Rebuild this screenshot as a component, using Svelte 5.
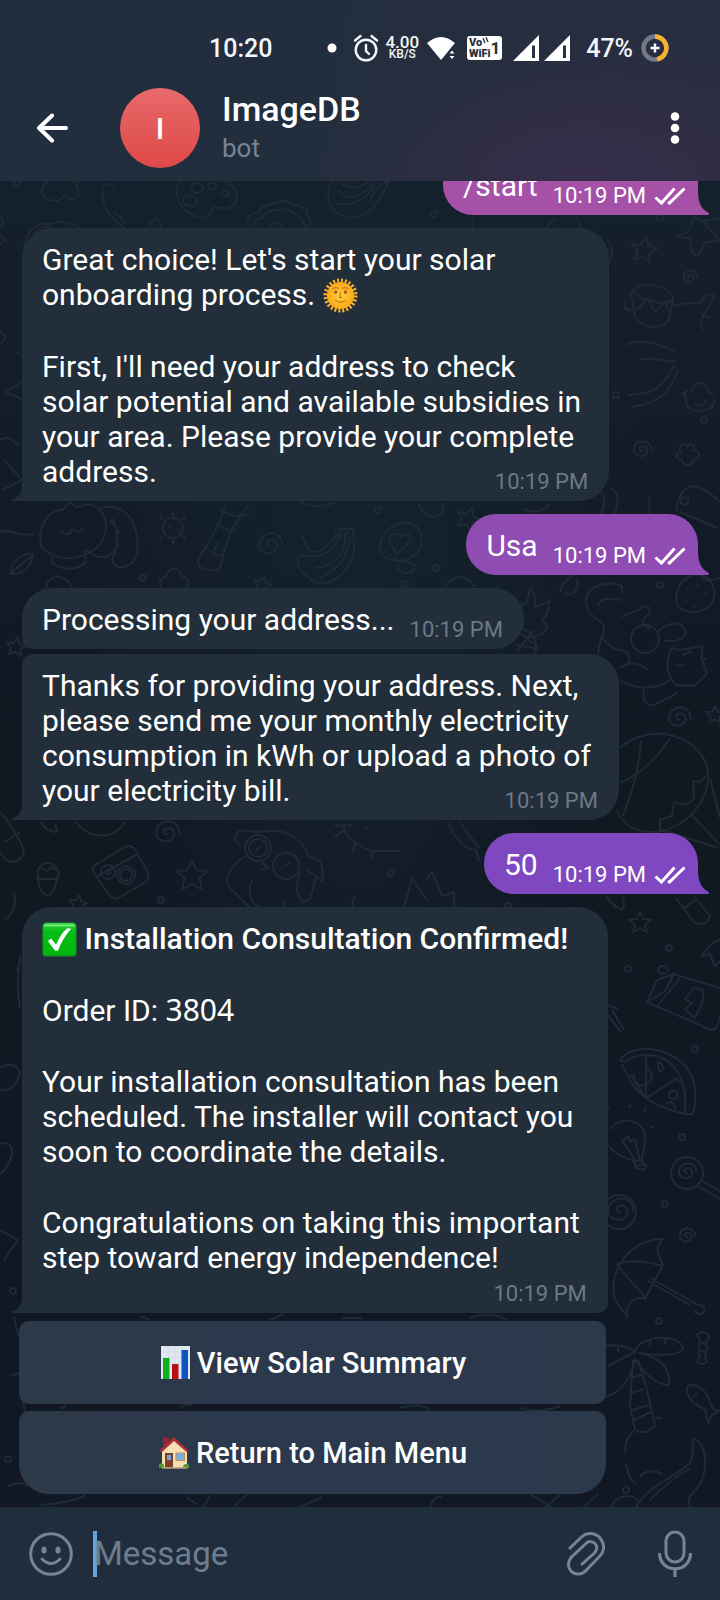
<script>
  const stars = [
    [644, 250, 13, 10], [192, 876, 16, 0], [78, 904, 9, 10], [640, 923, 11, 0],
    [16, 647, 10, 10], [468, 519, 12, 20], [715, 715, 9, 0], [262, 585, 9, 15]
  ];
  const swirls = [
    [690, 277, 7], [270, 545, 12], [679, 718, 11], [167, 833, 12], [687, 1172, 9],
    [687, 1236, 8], [620, 1211, 13], [642, 450, 9]
  ];
  const dots = [
    [434, 214], [660, 218], [378, 510], [436, 568], [143, 578], [405, 584], [660, 585],
    [161, 900], [391, 873], [508, 906], [669, 948], [628, 969], [695, 1049], [682, 1137],
    [665, 1204], [659, 1321], [626, 1490], [17, 183], [8, 1459], [13, 1291], [704, 420], [616, 395]
  ];
  const starPath = 'M0-1L.3-.36 1-.3.46.16.62.86 0 .48-.62.86-.46.16-1-.3-.3-.36Z';
  const swirlPath = 'M.1.1C-.3.2-.4-.3 0-.4.5-.5.8.1.4.5-.1.9-.9.6-.9 0-.9-.7-.3-1 .2-.95.8-.9 1.1-.4 1 .1';
  const time = '10:19 PM';
</script>

{#snippet ticks()}
  <svg class="ticks" viewBox="0 0 32 18" aria-hidden="true">
    <path d="M1.500 10.500 7.500 16 20.500 1.500M14 15l1.500 1L30.500 1.500" />
  </svg>
{/snippet}

{#snippet tailIn()}
  <svg class="tail tail-in" viewBox="0 0 12 16" aria-hidden="true">
    <path d="M12 0H11C11 7 8 12 1 14.500Q0 15 1 16H12Z" />
  </svg>
{/snippet}

{#snippet tailOut()}
  <svg class="tail tail-out" viewBox="0 0 12 24" aria-hidden="true">
    <path d="M0 0H1C1 11 4 18 11 21.500Q13 23 11 24H0Z" />
  </svg>
{/snippet}

<div class="screen">
  <header>
    <div class="status">
      <span class="clock">10:20</span>
      <div class="indicators">
        <svg class="dot" viewBox="0 0 10 10" aria-hidden="true"><circle cx="5" cy="5" r="4.500" fill="#fff" /></svg>
        <svg class="alarm" viewBox="0 0 26 28" aria-hidden="true">
          <g fill="none" stroke="#f3f5f8" stroke-width="2.400" stroke-linecap="round">
            <circle cx="13" cy="16" r="10.300" />
            <path d="M13 11v6l3 3M2 6.500 7.500 2M24 6.500 18.500 2" />
          </g>
        </svg>
        <div class="rate"><span>4.00</span><small>KB/S</small></div>
        <svg class="wifi" viewBox="0 0 28 26" aria-hidden="true">
          <path d="M0 8Q14-4 28 8L21 16.500 19 19 14 25Z" fill="#fff" />
          <path d="M22.500 18.500 25 15.500l2.500 3ZM22.500 21 25 24l2.500-3Z" fill="#fff" />
        </svg>
        <div class="vowifi">
          <span class="vw-text"><span>Vo<svg viewBox="0 0 8 8" aria-hidden="true"><path d="M1 1l2 5M4 0l2 5" stroke="#263040" stroke-width="1.300" /></svg></span><span>WiFi</span></span>
          <span class="vw-num">1</span>
        </div>
        <svg class="signal" viewBox="0 0 57 27" aria-hidden="true">
          <path d="M0 26 26 0V26ZM31 26 57 0V26Z" fill="#fff" />
          <path d="M20.500 10.500V23M51.500 10.500V23" stroke="#283143" stroke-width="3" />
        </svg>
        <span class="percent">47%</span>
        <svg class="ring" viewBox="0 0 28 28" aria-hidden="true">
          <circle cx="14" cy="14" r="11.500" fill="none" stroke="#737a87" stroke-width="4.500" />
          <path d="M14 2.500A11.500 11.500 0 0 1 16 25.300" fill="none" stroke="#f9b12c" stroke-width="4.500" />
          <path d="M14 9.500v9M9.500 14h9" stroke="#fff" stroke-width="2.400" />
        </svg>
      </div>
    </div>
    <div class="appbar">
      <button class="icon-btn back" aria-label="Back">
        <svg viewBox="0 0 32 30" aria-hidden="true"><path d="M30 15H3M16 2.500 3 15 16 27.500" fill="none" stroke="#fff" stroke-width="4" stroke-linecap="round" stroke-linejoin="round" /></svg>
      </button>
      <div class="avatar">I</div>
      <div class="peer">
        <h1>ImageDB</h1>
        <p>bot</p>
      </div>
      <button class="icon-btn more" aria-label="More options">
        <svg viewBox="0 0 10 34" aria-hidden="true"><g fill="#fff"><circle cx="5" cy="5.500" r="4.300" /><circle cx="5" cy="17" r="4.300" /><circle cx="5" cy="28.500" r="4.300" /></g></svg>
      </button>
    </div>
  </header>

  <main>
    <svg class="wallpaper" viewBox="0 181 720 1326" preserveAspectRatio="xMidYMid slice" aria-hidden="true">
      {#each stars as [x, y, r, a]}
        <path transform="translate({x} {y}) rotate({a}) scale({r})" d={starPath} />
      {/each}
      {#each swirls as [x, y, r]}
        <path transform="translate({x} {y}) scale({r})" d={swirlPath} />
      {/each}
      {#each dots as [x, y]}
        <circle cx={x} cy={y} r="3" />
      {/each}
      <!-- tree, cane, palette, cookie, bun -->
      <path d="M48 181c-10 8-6 20 4 19 7 4 10-4 14-4 6 8 16 0 11-8 0-4-2-6-4-7" />
      <path d="M115 191c-1-9-13-9-13 1 1 17 11 29 24 36M113 211l13 12M148 227l9-11 5 14" />
      <path d="M180 181c-8 13 0 32 20 37 14 0 8-11 17-11 13 5 24-4 18-17-5-7-9-9-14-9" />
      <ellipse cx="197" cy="188" rx="6" ry="5" /><ellipse cx="190" cy="201" rx="7" ry="5" /><ellipse cx="212" cy="186" rx="4" ry="3" /><ellipse cx="225" cy="193" rx="4" ry="3" />
      <path d="M252 228c-10-8 0-17 7-15 2-10 16-9 18-10 8-6 16 2 22 3 8 4 10 4 7 9 9 4 2 14-2 14M254 226c-1-6 5-8 9-8 2-8 12-8 16-8 8-3 14 2 18 6 6 1 6 4 5 7 5 1 4 4 2 7M268 229q8-14 16 0" />
      <path d="M332 181c-10 20 2 37 20 37 21-3 30-21 37-37-12 3-15 14-20 20M338 190c9 12 24 9 36-8M336 203c16 4 29-3 39-17M342 184c10 6 20 4 27-3" />
      <path d="M24 246c4-20 16-24 28-22 10-4 24-2 30 8M34 233q10-10 20-4M0 216q6 6 0 10M0 234l6 6-6 4" />
      <path d="M472 228q0-9 1-10M545 228l12-10M575 216l8 14M607 240c7 5 6 20 1 24" />
      <!-- starfish, drum, bone -->
      <path d="M677 237l12-6 5-14 9 4 17-3M677 237l13 1 2 15 6 3 8-14 14-1M703 221l17 20" />
      <path d="M633 290c8-12 42-2 40 9-3 8-36 2-40-9Zm-2 3 4 24c9 14 30 12 34 2l4-18M626 300c-4 6 0 11 6 10M637 310l10-12 8 14 10-10 6 14" />
      <path d="M673 306c10-4 20-2 28-4 4-8 10-10 13-6-3 9-8 16-12 20M710 318c-6-6-14 2-6 12M626 345c14-8 34 0 48 6M640 360c18-5 26 4 36 1" />
      <path d="M674 365c-10 20-18 29-46 30M678 370c-8 22-18 33-46 37" />
      <path d="M692 392c0-12 16-12 16 0 8 2 10 14-2 18-14 3-22-3-20-14l-4-2 6-3M694 403q8 6 12-3" />
      <path d="M681 452c-4-7 4-11 6-5 2-6 10-2 6 4 8-1 8 7 1 8-1 8-13 8-12 0-7 1-8-6-1-7Z" />
      <path d="M0 330l6 8-6 6M6 392l22-14v24ZM16 352l6 3M0 440q10-6 18 6M4 460l18 20-20 10" />
      <!-- sleeping cat, virus, sock, bananas, egg -->
      <path d="M42 548c-6-20 6-38 20-38l8-8 6 5 14-3 8 4c14 14 8 36-8 44-14 8-32 10-48-4ZM100 508c30-8 42 24 36 48-5 14-22 14-24 4 8-18 6-30 0-42M60 531c4 5 10 4 12-2 5 4 10 3 11-2M52 557c-4 13 28 16 34 4l-2-10M86 550c14 12 26 8 32-6M110 520l10 14" />
      <circle cx="173" cy="528" r="10" /><path d="M163 520l-3-4M183 520l3-4M173 517v-5M163 536l-3 4M183 536l3 4M173 539v5M168 526h3M177 530h3" />
      <path d="M226 504l-8 22-20 34c-2 10 16 14 22 7l10-35 19-28M219 510l16 6 14-1M216 524l14 7 8-2M205 548l14 8M218 542l-4 9M226 547l-4 9" />
      <path d="M336 531c-6 5 16 8 11-2M302 535l6 14c14 10 24-10 32-16v-4h13v6c5 24-8 42-26 48h-10c-12-8-21-12-19-26l8-2M345 533c2 20-10 34-30 35M340 534c-4 16-18 27-40 20M350 536c-1 22-13 34-30 42" />
      <path d="M382 538c6-14 24-20 36-10 12 20-8 36-22 32-11 2-20-8-14-22Zm7 3c0-8 9-9 12-4 5-6 12-2 8 5l-12 12ZM398 568c-2-8 12-8 16-2 1 8-12 10-16 2Z" />
      <path d="M300 502q18 8 36 0M418 502c4 14 14 18 24 12l2-12" />
      <path d="M0 532c10-5 20 6 34 2M33 554c-2 10-6 20-22 20 0-11 10-22 22-20ZM12 572l22-18" />
      <path d="M162 588c-6-8 4-14 4-10 0-12 16-12 15-2 8 0 10 8 2 14M46 588c2-14 20-16 26 0M446 586c6-12 22-12 28 0" />
      <!-- fish, watermelon, strawberry, stray leaves -->
      <path d="M600 492c8 6 4 22-4 26M612 488c10 8 4 24 0 32M522 508c10 6 20 4 28-4M676 512c2-22 14-30 24-24 10 4 16 10 20 14M680 512l38 16M684 497a4 4 0 1 0 1 0M650 497c-4 12 4 16-2 26" />
      <path d="M560 592c2-10 8-14 16-18M565 594c12 2 14-8 12-16" />
      <path d="M676 598c2-20 20-30 34-18 10 16 2 30-14 32-14 0-20-4-20-14ZM688 588v2M698 584v2M686 600v2M696 596v2M706 592v2M694 606v2M704 602v2M700 574c4 10 16 6 20 4" />
      <!-- pineapple -->
      <path d="M516 620c4-4 6-12 4-16 8 2 8-6 10-16 6 6 6 14 4 20 6-4 14-4 15-8 1 12-4 16-7 22 4 0 6 4 4 8-6 6-16 10-22 6M522 628c16 6 18 22 8 30h-28M520 633l18 14M516 645l22 4M534 630l-16 20" />
      <!-- tumbling cat -->
      <path d="M622 594v-8c-10-6-36-2-36 16 2 18 20 18 18 28-8 22-10 46 2 52M622 600c-12-2-24-2-24 6M622 617c8-6 14-4 18-8 6-6 14 0 8 6-10 8-4 10 2 14" />
      <circle cx="645" cy="639" r="14" /><path d="M658 632c6-8 20-12 26-4 6 8-6 16-20 12M600 638c6 0 10 12 20 12 8 2 12 6 8 14M620 668c10-8 22-4 28 2M672 648l8 2 22-4v14l5 14-13 12-18-1c-14-16-8-30-4-37ZM683 655l8-4M700 659h6M676 664q4 4 8 0M620 680c16 10 36 10 50 0M644 690c-3 12 6 18 12 14 10-6 18-8 22-12" />
      <!-- hot-air balloon -->
      <path d="M620 748c30-26 76-14 87 18 6 30-16 60-50 66-20 2-36-8-40-22M641 740c-2 34-12 60-18 76M670 738c-18 28-38 40-50 45M707 776l-8 6-6-1 1 18-8 6-12-3-2 14-12 4v10l-6 6M662 830l56 18M690 813l30 32M710 778l10 40" />
      <!-- pills, clipboard, camera, mole, sun -->
      <path d="M0 812c10 12 18 24 24 38-2 14-14 14-20 8L0 852M4 842l16-10M41 822c4 8 10 10 16 10l-2-9M76 822c14 18 38 18 49 0" />
      <path d="M38 878c-4-20 22-20 21 0M38 876c0 24 18 26 19 0M36 879h22M41 868l6 3 4-4 6 3" />
      <path d="M95 865l30-18q6-3 10 3l13 22q2 7-4 11l-26 15q-5 2-9-3l-15-22q-3-5 1-8ZM96 877l42-23" /><circle cx="108" cy="872" r="7" /><circle cx="108" cy="872" r="2" /><circle cx="126" cy="875" r="9" /><circle cx="126" cy="875" r="6" />
      <path d="M240 846c-10-10-2-18 6-15 22 3 30-4 44 4 14 8 18 18 18 22 14 0 16 10 14 24l-16-12M246 856c-24 14-20 30-14 34l18 18M252 880c-6 12 0 26 10 28h34M300 872c-6 14-2 28 4 30 10-2 8-16 12-24M283 900l2 8" /><circle cx="258" cy="848" r="9" /><circle cx="258" cy="848" r="13" /><circle cx="286" cy="866" r="13" /><path d="M255 852l6-6M281 868l10-6M262 862l6 6-7 2" />
      <path d="M344 824c-2 10 10 20 28 27h28M344 830l-10 7M356 842l-4 12M372 851v8M334 824q8 4 20 0M365 826l3 3" />
      <path d="M448 822c6 16 14 26 28 28l3 12M460 822q12 18 20 26M404 908l8-30 16 24M426 880l6-8 10 24 12-4v18M352 908q0-9 4-12M14 892q4 20-10 28" />
      <path d="M606 896l10 12M610 902l12 8q4-4 0-14M676 898l18 24q12 6 16-6l-16-20M685 908l10-8" />
      <!-- milk carton, rocket tail -->
      <path d="M657 980l-10 22 64 28q8 0 10-20M657 980l16-6 47 14M647 1002l18-11 9-16M656 1008l24-30M665 991l7-15M658 970a5 4 0 1 0 10 0 5 4 0 1 0-10 0M693 988l-8 11 7 4-7 6 9 9M693 988l10 2q2 14-9 28M702 956l8-2 5 12 5-5M702 956q8-14 18-16" />
      <path d="M608 1005l10 4M608 1015l14 18M611 1020l8 9M612 1010l12 20" />
      <!-- pizza -->
      <path d="M620 1060c16-24 90-10 73 54h-8c6-64-44-66-60-52ZM622 1064c8 20 18 40 64 50M646 1055v43l32-20M646 1098l-16-24M658 1062q8 4 4 8-4 4-4-8ZM634 1074a9 9 0 1 0 12-6M674 1078q6 6 8 3M670 1092c4-4 10 2 6 6-6 4-8-2-6-6ZM666 1104q5-6 10 5" />
      <!-- bulb, lollipop, button, umbrella -->
      <path d="M610 1130c12-18 36-8 35 8 0 12-4 18-3 24l4 4-2 4-8-2-2-7c-10-4-22-8-25-16M622 1140l14 22M622 1142l6-6 2 6 5-3 5 22M634 1162l9-3M636 1166l9-2M609 1110l-2-4M630 1108v-3M644 1112l2-3M651 1127h3" />
      <circle cx="687" cy="1173" r="16" /><path d="M698 1186l22 13M702 1181l18 10" /><circle cx="619" cy="1212" r="17" />
      <path d="M663 1239c-34 0-56 34-48 60 4 10 12 14 12 18-2-14 8-22 18-18l18-34c-6-12-8-18 0-26ZM616 1264c12-4 28-4 47 2M616 1264q14 16 30 34M650 1278l48 27c6-1 8 4 5 8-3 2-6 1-9-2M648 1281l42 24" />
      <!-- palm, candy, fish -->
      <path d="M606 1346c12-2 22 0 29 6 2-16 44-20 48-4-2 8-24 8-44 5 16 4 32 10 30 32-12 0-26-12-34-26-2 14-12 34-30 38M635 1352c-8 4-20 10-27 14M633 1360l-3 46 5 24q10 6 20-4l-8-36-9-30M631 1378l10-3M630 1393l14-4M632 1410l17-5M634 1420l17-8M655 1418h7M650 1340v6M665 1338v6M618 1347v5" />
      <path d="M697 1335c4-6 12-2 12 2l-3 5c3 6 0 10-1 14l2 6q-6 4-10 0l3-5c-4-6 0-12 0-17ZM700 1342l6 2M700 1350l5 2" />
      <path d="M687 1389c0-8 14-4 20 6l6 14 7 2-8 4-4 8-3-14c-12-4-18-12-18-20ZM693 1397l4-4" />
      <path d="M634 1430c-8 10-10 14-8 24M626 1464c2 10 4 16 10 20" />
      <!-- crocodile -->
      <path d="M636 1507c12-22 40-30 54-44 6-10 0-24 4-24 14 4 14 34 4 48-6 8-12 10-8 20M650 1500q20-20 40-32M640 1478c2-8 16-8 22-4M612 1507c2-12 20-14 26-6" />
      <!-- doodles between and beside buttons -->
      <path d="M14 1316q4 30 20 36M10 1376l14-4-4 10 6 36M8 1486q12-6 20 0M40 1505q30-2 46-10M186 1497l12 8M210 1495l-6 12M234 1506l14-12M300 1507l22-10M430 1507q4-12 12-10M530 1494l22 13M545 1507l16-13M584 1507l14-13" />
      <path d="M0 1068q14-8 20 4-4 20-20 18M0 1144c14-6 18 14 0 30M16 970q6-8 4-14-4 30 0 52M0 1230l18 10-14 20" />
      <path d="M140 1316l10 4M270 1320l14-6M342 1318h20M60 1409l6-3M180 1409q4-6 12-4M400 1408q18-6 30 2M520 1408q20 6 40-2M470 1318q20-8 36 2" />
    </svg>

    <section class="msg sent plum">
      <p>/start</p>
      <span class="meta">{time}{@render ticks()}</span>
      {@render tailOut()}
    </section>

    <section class="msg got">
      <p>{"Great choice! Let's start your solar\nonboarding process. "}<svg class="emoji" viewBox="0 0 36 36" role="img" aria-label="Sun"><defs><radialGradient id="sun"><stop offset="0" stop-color="#ffd23f" /><stop offset="1" stop-color="#fba61a" /></radialGradient></defs><circle cx="18" cy="18" r="15.500" fill="none" stroke="#f7b32b" stroke-width="4" stroke-dasharray="2.050 2.008" /><circle cx="18" cy="18" r="14" fill="url(#sun)" /><g fill="#a4631c"><ellipse cx="13" cy="14.500" rx="1.700" ry="2" /><ellipse cx="23" cy="14.500" rx="1.700" ry="2" /></g><path d="M10 11q3-2 6-.5M20 10.500q3-1.500 6 .5M18 15l-1 5h2.500M13 23q5 4 10 0" fill="none" stroke="#c77a12" stroke-width="1.200" stroke-linecap="round" /></svg></p>
      <p>{"First, I'll need your address to check\nsolar potential and available subsidies in\nyour area. Please provide your complete\naddress."}<span class="meta tucked">{time}</span></p>
      {@render tailIn()}
    </section>

    <section class="msg sent violet">
      <p>Usa</p>
      <span class="meta">{time}{@render ticks()}</span>
      {@render tailOut()}
    </section>

    <section class="msg got single">
      <p>Processing your address...</p>
      <span class="meta">{time}</span>
    </section>

    <section class="msg got follow">
      <p>{"Thanks for providing your address. Next,\nplease send me your monthly electricity\nconsumption in kWh or upload a photo of\nyour electricity bill."}<span class="meta tucked">{time}</span></p>
      {@render tailIn()}
    </section>

    <section class="msg sent indigo">
      <p>50</p>
      <span class="meta">{time}{@render ticks()}</span>
      {@render tailOut()}
    </section>

    <section class="msg got with-actions">
      <p><svg class="emoji" viewBox="0 0 36 36" role="img" aria-label="Check mark"><defs><linearGradient id="chk" x2="0" y2="1"><stop offset="0" stop-color="#3fd74a" /><stop offset=".25" stop-color="#08bd18" /><stop offset="1" stop-color="#03b50c" /></linearGradient></defs><rect x=".5" y=".5" width="35" height="35" rx="4" fill="#14932a" /><rect x="1.500" y="1" width="33" height="33" rx="3.500" fill="url(#chk)" /><path d="M3 3.500h30" stroke="#7fee86" stroke-width="1.500" stroke-linecap="round" /><path d="M6 19.500 9.500 17 14.500 23.500Q19 12 26 6.500L30 7Q21 17 16.500 29.500H13.500Z" fill="#fff" /></svg>&nbsp;<strong>Installation Consultation Confirmed!</strong></p>
      <p>Order ID: <code>3804</code></p>
      <p>{"Your installation consultation has been\nscheduled. The installer will contact you\nsoon to coordinate the details."}</p>
      <p>{"Congratulations on taking this important\nstep toward energy independence!"}</p>
      <span class="meta own-line">{time}</span>
      {@render tailIn()}
    </section>

    <div class="actions">
      <button>
        <svg viewBox="0 0 34 34" aria-hidden="true"><rect x="2" y="0" width="29" height="33" fill="#dfe7f2" /><path d="M2 6h29M2 11.500h29M2 17h29M2 22.500h29M9 0v33M16 0v33M23 0v33" stroke="#d3dce9" stroke-width="1" /><rect x="4" y="12" width="6.500" height="21" fill="#0daf1c" /><rect x="13" y="18" width="6.500" height="15" fill="#b90d16" /><rect x="22.500" y="4" width="6.500" height="29" fill="#0c56bd" /></svg>
        <span>View Solar Summary</span>
      </button>
      <button>
        <svg viewBox="0 0 34 34" aria-hidden="true"><path d="M5 1h6v9H5Z" fill="#8d2730" /><path d="M4 14 16 3 29 14V32H4Z" fill="#f5deb2" /><path d="M1 15 16 1 31 15 28.500 16 16 5 4 16Z" fill="#a92f36" /><rect x="7" y="17" width="8" height="14.500" fill="#7c3f29" /><rect x="9" y="19" width="4" height="5" fill="#73a9d4" /><rect x="18" y="17" width="8.500" height="7.500" fill="#6fb3e3" stroke="#c98a59" stroke-width="1" /><path d="M1 32v-4q3-2 5 1v3ZM25 32q0-4 3-4 3-1 3 2v2Z" fill="#4f9a35" /><path d="M4 32h25" stroke="#b9a27b" stroke-width="1.500" /></svg>
        <span>Return to Main Menu</span>
      </button>
    </div>
  </main>

  <footer>
    <button class="icon-btn" aria-label="Emoji">
      <svg class="smile" viewBox="0 0 44 44" aria-hidden="true"><circle cx="22" cy="22" r="20.300" fill="none" stroke="#758496" stroke-width="3" /><ellipse cx="15" cy="18" rx="2.600" ry="3.500" fill="#758496" /><ellipse cx="29" cy="18" rx="2.600" ry="3.500" fill="#758496" /><path d="M13 27q9 9 18 0" fill="none" stroke="#758496" stroke-width="3" stroke-linecap="round" /></svg>
    </button>
    <div class="field">
      <span class="caret"></span>
      <input type="text" placeholder="Message" aria-label="Message" />
    </div>
    <button class="icon-btn" aria-label="Attach file">
      <svg class="clip" viewBox="0 0 38 44" aria-hidden="true"><path d="M2 17 14 5.500C21-1 31 1 35 9c3 6 1 12-3 16L19 38.500C15 43 8 43 4.500 39.500 0 35 1 29 4.500 25L19 11.500c3-3 7-2 9 0 3 3 2 6 0 9L14 33" fill="none" stroke="#758496" stroke-width="3" /></svg>
    </button>
    <button class="icon-btn" aria-label="Record voice message">
      <svg class="mic" viewBox="0 0 36 48" aria-hidden="true"><rect x="9" y="2" width="18" height="30" rx="9" fill="none" stroke="#758496" stroke-width="3" /><path d="M2.500 23C2.500 44 33.500 44 33.500 23M18 39v8" fill="none" stroke="#758496" stroke-width="3.200" /></svg>
    </button>
  </footer>
</div>

<style>
  :global(body) {
    background: #111923;
  }
  .screen {
    display: flex;
    flex-direction: column;
    height: 100vh;
    font-family: Roboto, 'Liberation Sans', sans-serif;
    color: #fff;
  }
  svg {
    display: block;
    flex: none;
  }
  button {
    font: inherit;
    color: inherit;
    border: 0;
    padding: 0;
    background: none;
  }
  header {
    flex: none;
    padding-top: 21px;
    background:
      radial-gradient(ellipse 260px 140px at 80% 100%, #372e4a, transparent),
      linear-gradient(100deg, #222e3d 40%, #292d40);
  }
  .status {
    display: flex;
    align-items: center;
    justify-content: space-between;
    height: 54px;
    padding: 0 51px 0 209px;
    font-size: 25px;
    font-weight: 500;
    color: #f3f5f8;
  }
  .indicators {
    display: flex;
    align-items: center;
  }
  .dot {
    width: 10px;
    margin-right: 16px;
  }
  .alarm {
    width: 26px;
    margin-right: 6px;
  }
  .rate {
    display: grid;
    justify-items: center;
    font-size: 17px;
    line-height: 13px;
    margin-right: 8px;
  }
  .rate small {
    font-size: 12px;
    line-height: 11px;
  }
  .wifi {
    width: 28px;
    margin-right: 12px;
  }
  .vowifi {
    display: flex;
    align-items: center;
    justify-content: center;
    width: 35px;
    height: 24px;
    border-radius: 3px;
    background: #fff;
    color: #263040;
    font-weight: 900;
    margin-right: 11px;
  }
  .vw-text {
    display: grid;
    font-size: 11px;
    line-height: 11px;
  }
  .vw-text svg {
    display: inline-block;
    width: 8px;
    vertical-align: 1px;
  }
  .vw-num {
    font-size: 17px;
    font-weight: 700;
  }
  .signal {
    width: 57px;
    margin-right: 16px;
  }
  .percent {
    margin-right: 8px;
  }
  .ring {
    width: 28px;
  }
  .appbar {
    display: flex;
    align-items: center;
    height: 106px;
    padding: 0 40px 0 36px;
  }
  .icon-btn {
    display: grid;
    place-items: center;
  }
  .back svg {
    width: 32px;
  }
  .more svg {
    width: 10px;
  }
  .avatar {
    display: grid;
    place-items: center;
    width: 80px;
    height: 80px;
    margin: 0 22px 0 52px;
    border-radius: 50%;
    background: linear-gradient(#e76a6a, #df4848);
    font-size: 30px;
    font-weight: 500;
  }
  .peer {
    flex: 1;
  }
  h1,
  p {
    margin: 0;
  }
  h1 {
    font-size: 34px;
    line-height: 40px;
    font-weight: 500;
  }
  .peer p {
    font-size: 26px;
    line-height: 38px;
    color: #768594;
  }
  main {
    position: relative;
    flex: 1;
    min-height: 0;
    overflow: hidden;
    display: flex;
    flex-direction: column;
    justify-content: flex-end;
    align-items: flex-start;
    padding: 0 22px 13px;
    background:
      radial-gradient(ellipse at 50% 22%, #14222c, transparent 55%),
      linear-gradient(#14202b, #101822 45%, #111824);
  }
  .wallpaper {
    position: absolute;
    inset: 0;
    width: 100%;
    height: 100%;
    fill: none;
    stroke: #1f2a35;
  }
  .wallpaper :is(path, circle, ellipse) {
    stroke-width: 2px;
    vector-effect: non-scaling-stroke;
    stroke-linejoin: round;
  }
  .msg {
    position: relative;
    flex: none;
    max-width: 100%;
    box-sizing: border-box;
    margin-top: 13px;
    padding: 14px 28px 12px 20px;
    border-radius: 30px;
    background: var(--fill);
    font-size: 30px;
    line-height: 35px;
  }
  .msg p {
    white-space: pre-line;
  }
  .msg p + p {
    margin-top: 36px;
  }
  .got {
    --fill: #222e39;
    border-bottom-left-radius: 0;
  }
  .sent {
    display: flex;
    align-items: flex-end;
    gap: 15px;
    align-self: flex-end;
    padding-right: 12px;
    border-bottom-right-radius: 0;
  }
  .plum {
    --fill: #a551a8;
  }
  .violet {
    --fill: #8f4cb2;
  }
  .indigo {
    --fill: #7f48c0;
  }
  .single {
    display: flex;
    align-items: flex-end;
    gap: 15px;
    border-bottom-left-radius: 10px;
  }
  .follow {
    margin-top: 5px;
    border-top-left-radius: 10px;
  }
  .with-actions {
    border-bottom-right-radius: 10px;
  }
  .meta {
    display: flex;
    justify-content: flex-end;
    align-items: center;
    margin: 0 -7px -6px 0;
    font-size: 22px;
    line-height: 26px;
    color: #6c7986;
  }
  .meta.tucked {
    float: right;
    margin-top: 15px;
  }
  .meta.own-line {
    margin-top: 6px;
  }
  .sent .meta {
    margin-right: 0;
    gap: 8px;
    color: #fff;
  }
  .ticks {
    width: 32px;
    fill: none;
    stroke: #fff;
    stroke-width: 3px;
  }
  .tail {
    position: absolute;
    bottom: 0;
    width: 12px;
    fill: var(--fill);
  }
  .tail-in {
    left: -11px;
  }
  .tail-out {
    right: -11px;
  }
  .emoji {
    display: inline-block;
    width: 35px;
    height: 35px;
    vertical-align: -8px;
  }
  strong {
    font-weight: 500;
  }
  code {
    font-family: 'Noto Sans', sans-serif;
    font-size: 30px;
    line-height: 30px;
  }
  .actions {
    position: relative;
    flex: none;
    display: grid;
    gap: 7px;
    width: 587px;
    max-width: 100%;
    margin: 8px 0 0 -3px;
  }
  .actions button {
    display: flex;
    align-items: center;
    justify-content: center;
    gap: 4px;
    height: 83px;
    border-radius: 10px;
    background: linear-gradient(90deg, #2c3948, #2c384d 50%, #2c394b);
    font-size: 29px;
    font-weight: 500;
  }
  .actions button:last-child {
    border-radius: 10px 10px 30px 30px;
  }
  .actions svg {
    width: 34px;
  }
  footer {
    flex: none;
    display: flex;
    align-items: center;
    height: 93px;
    padding: 0 27px 0 29px;
    background: #1f2d3d;
  }
  .smile {
    width: 44px;
  }
  .field {
    flex: 1;
    display: flex;
    align-items: center;
    min-width: 0;
    margin: 0 20px;
  }
  .caret {
    width: 4px;
    height: 46px;
    margin-right: -3px;
    background: #62a5dc;
  }
  input {
    flex: 1;
    min-width: 0;
    border: 0;
    padding: 0;
    outline: 0;
    background: none;
    font: 33px Roboto, sans-serif;
    color: #fff;
  }
  input::placeholder {
    color: #6d7d8d;
    opacity: 1;
  }
  .clip {
    width: 38px;
    margin-right: 52px;
  }
  .mic {
    width: 36px;
  }
</style>
